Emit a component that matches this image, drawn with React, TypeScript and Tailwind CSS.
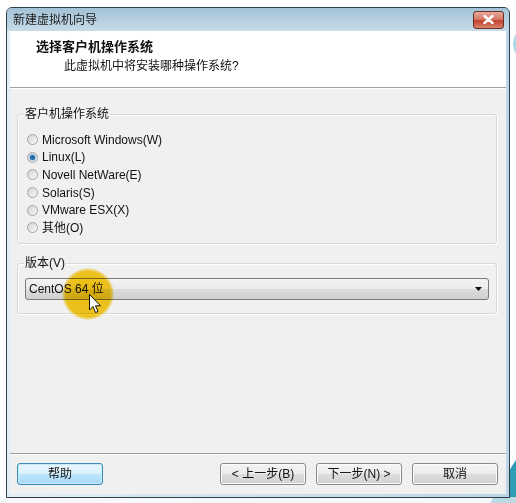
import React from "react";

const osList = [
  { label: "Microsoft Windows(W)", checked: false },
  { label: "Linux(L)", checked: true },
  { label: "Novell NetWare(E)", checked: false },
  { label: "Solaris(S)", checked: false },
  { label: "VMware ESX(X)", checked: false },
  { label: "其他(O)", checked: false },
];

function Radio({ label, checked }: { label: string; checked: boolean }) {
  return (
    <div className="flex h-[17.6px] items-center gap-[4px]">
      <span className="flex h-[11px] w-[11px] items-center justify-center rounded-full border border-[#a3a3a3] bg-gradient-to-br from-[#d2d2d2] to-[#fafafa]">
        {checked && (
          <span className="h-[5px] w-[5px] rounded-full bg-[#2c6aa6] shadow-[0_0_0_1px_#9cc7ea]" />
        )}
      </span>
      <span className="leading-[14px]">{label}</span>
    </div>
  );
}

function GroupBox({
  title,
  className,
  children,
}: {
  title: string;
  className: string;
  children: React.ReactNode;
}) {
  return (
    <div
      className={`relative rounded-[3px] border border-[#d8d8d8] shadow-[inset_1px_1px_0_#fff,1px_1px_0_#fff] ${className}`}
    >
      <span className="absolute left-[6px] top-[-8px] bg-[#f0f0f0] px-[1px] leading-[14px]">
        {title}
      </span>
      {children}
    </div>
  );
}

function Button({ children, primary }: { children: React.ReactNode; primary?: boolean }) {
  return (
    <button
      type="button"
      className={
        primary
          ? "flex h-[22px] w-[86px] items-center justify-center rounded-[3px] border border-[#3c8bb6] bg-[linear-gradient(#eaf7fd_0%,#d9f0fc_50%,#bee6fd_50%,#a7d9f5_100%)] text-[12px] shadow-[inset_0_0_0_1px_#c6ecfb]"
          : "flex h-[22px] w-[86px] items-center justify-center rounded-[3px] border border-[#8a8a8a] bg-[linear-gradient(#f4f4f4_0%,#ebebeb_50%,#dddddd_50%,#d1d1d1_100%)] text-[12px] shadow-[inset_0_0_0_1px_#fbfbfb]"
      }
    >
      {children}
    </button>
  );
}

export default function App() {
  return (
    <div className="relative h-[503px] w-[516px] overflow-hidden bg-white font-['Liberation_Sans','Noto_Sans_CJK_SC',sans-serif] text-[12px] text-[#111]">
      {/* desktop wallpaper bits */}
      <svg className="absolute left-0 top-0" width="516" height="503">
        <circle cx="532" cy="44" r="17" fill="none" stroke="#a9dbe7" strokeWidth="4" />
        <polygon points="512,466 516,460 516,503 490,503" fill="#2f9bb5" />
        <rect x="0" y="497" width="516" height="6" fill="#f3f5f6" opacity="0.7" />
      </svg>

      <div className="relative ml-[6px] mt-[7px] flex h-[491px] w-[504px] flex-col rounded-t-[6px] border border-[#2e3f4c] bg-[linear-gradient(90deg,#e3edf4,#bdd5e5)]">
        {/* title bar */}
        <div className="flex h-[23px] items-center justify-between rounded-t-[5px] bg-gradient-to-b from-[#a3c2d7] to-[#c8dbe8] pl-[6px] pr-[5px]">
          <span className="leading-[14px] text-[#1a1a1a]">新建虚拟机向导</span>
          <div className="flex h-[18px] w-[31px] items-center justify-center rounded-[3px] border border-[#6a3128] bg-[linear-gradient(#e9a99b_0%,#d77a68_45%,#c4412d_55%,#d8836d_100%)]">
            <svg width="11" height="9" viewBox="0 0 11 9">
              <path d="M1.5 1 L9.5 8 M9.5 1 L1.5 8" stroke="#fff" strokeWidth="2.4" strokeLinecap="round" />
            </svg>
          </div>
        </div>

        <div className="mx-[3px] mb-[3px] flex flex-1 flex-col bg-[#f0f0f0]">
          {/* header */}
          <div className="h-[57px] border-b border-[#a0a0a0] bg-white">
            <div className="pl-[26px] pt-[8px] text-[13px] font-bold leading-[16px]">
              选择客户机操作系统
            </div>
            <div className="mt-[3px] pl-[54px] leading-[16px]">此虚拟机中将安装哪种操作系统?</div>
          </div>

          {/* body */}
          <div className="flex flex-1 flex-col border-t border-white pl-[7px] pr-[9px]">
            <GroupBox title="客户机操作系统" className="mt-[25px] h-[130px] pl-[9px] pt-[16px]">
              {osList.map((os) => (
                <Radio key={os.label} label={os.label} checked={os.checked} />
              ))}
            </GroupBox>

            <GroupBox title="版本(V)" className="mt-[19px] h-[51px] px-[7px] pt-[14px]">
              <div className="flex h-[22px] items-center justify-between rounded-[3px] border border-[#7a7a7a] bg-[linear-gradient(#f3f3f3_0%,#ebebeb_50%,#dcdcdc_50%,#d0d0d0_100%)] pl-[3px] pr-[6px]">
                <span className="leading-[14px]">CentOS 64 位</span>
                <svg width="7" height="4" viewBox="0 0 7 4">
                  <path d="M0 0 H7 L3.5 4 Z" fill="#111" />
                </svg>
              </div>
            </GroupBox>
          </div>

          {/* footer */}
          <div className="flex h-[41px] items-center border-t border-[#a0a0a0] pl-[7px] pr-[8px] shadow-[inset_0_1px_0_#fff]">
            <Button primary>帮助</Button>
            <div className="ml-auto flex gap-[10px]">
              <Button>&lt; 上一步(B)</Button>
              <Button>下一步(N) &gt;</Button>
              <Button>取消</Button>
            </div>
          </div>
        </div>
      </div>

      {/* click highlight + cursor */}
      <div className="pointer-events-none absolute left-[62px] top-[268px] h-[52px] w-[52px] rounded-full bg-[radial-gradient(circle,rgba(250,196,0,0.95)_0%,rgba(250,200,10,0.9)_62%,rgba(250,205,40,0)_72%)] mix-blend-multiply" />
      <svg className="pointer-events-none absolute left-[89px] top-[294px]" width="13" height="20" viewBox="0 0 13 20">
        <path d="M0.5 0.5 L0.5 16 L4 12.5 L6.5 18.5 L9 17.5 L6.5 11.8 L11.5 11.8 Z" fill="#fff" stroke="#111" strokeWidth="1" strokeLinejoin="round" />
      </svg>
    </div>
  );
}
